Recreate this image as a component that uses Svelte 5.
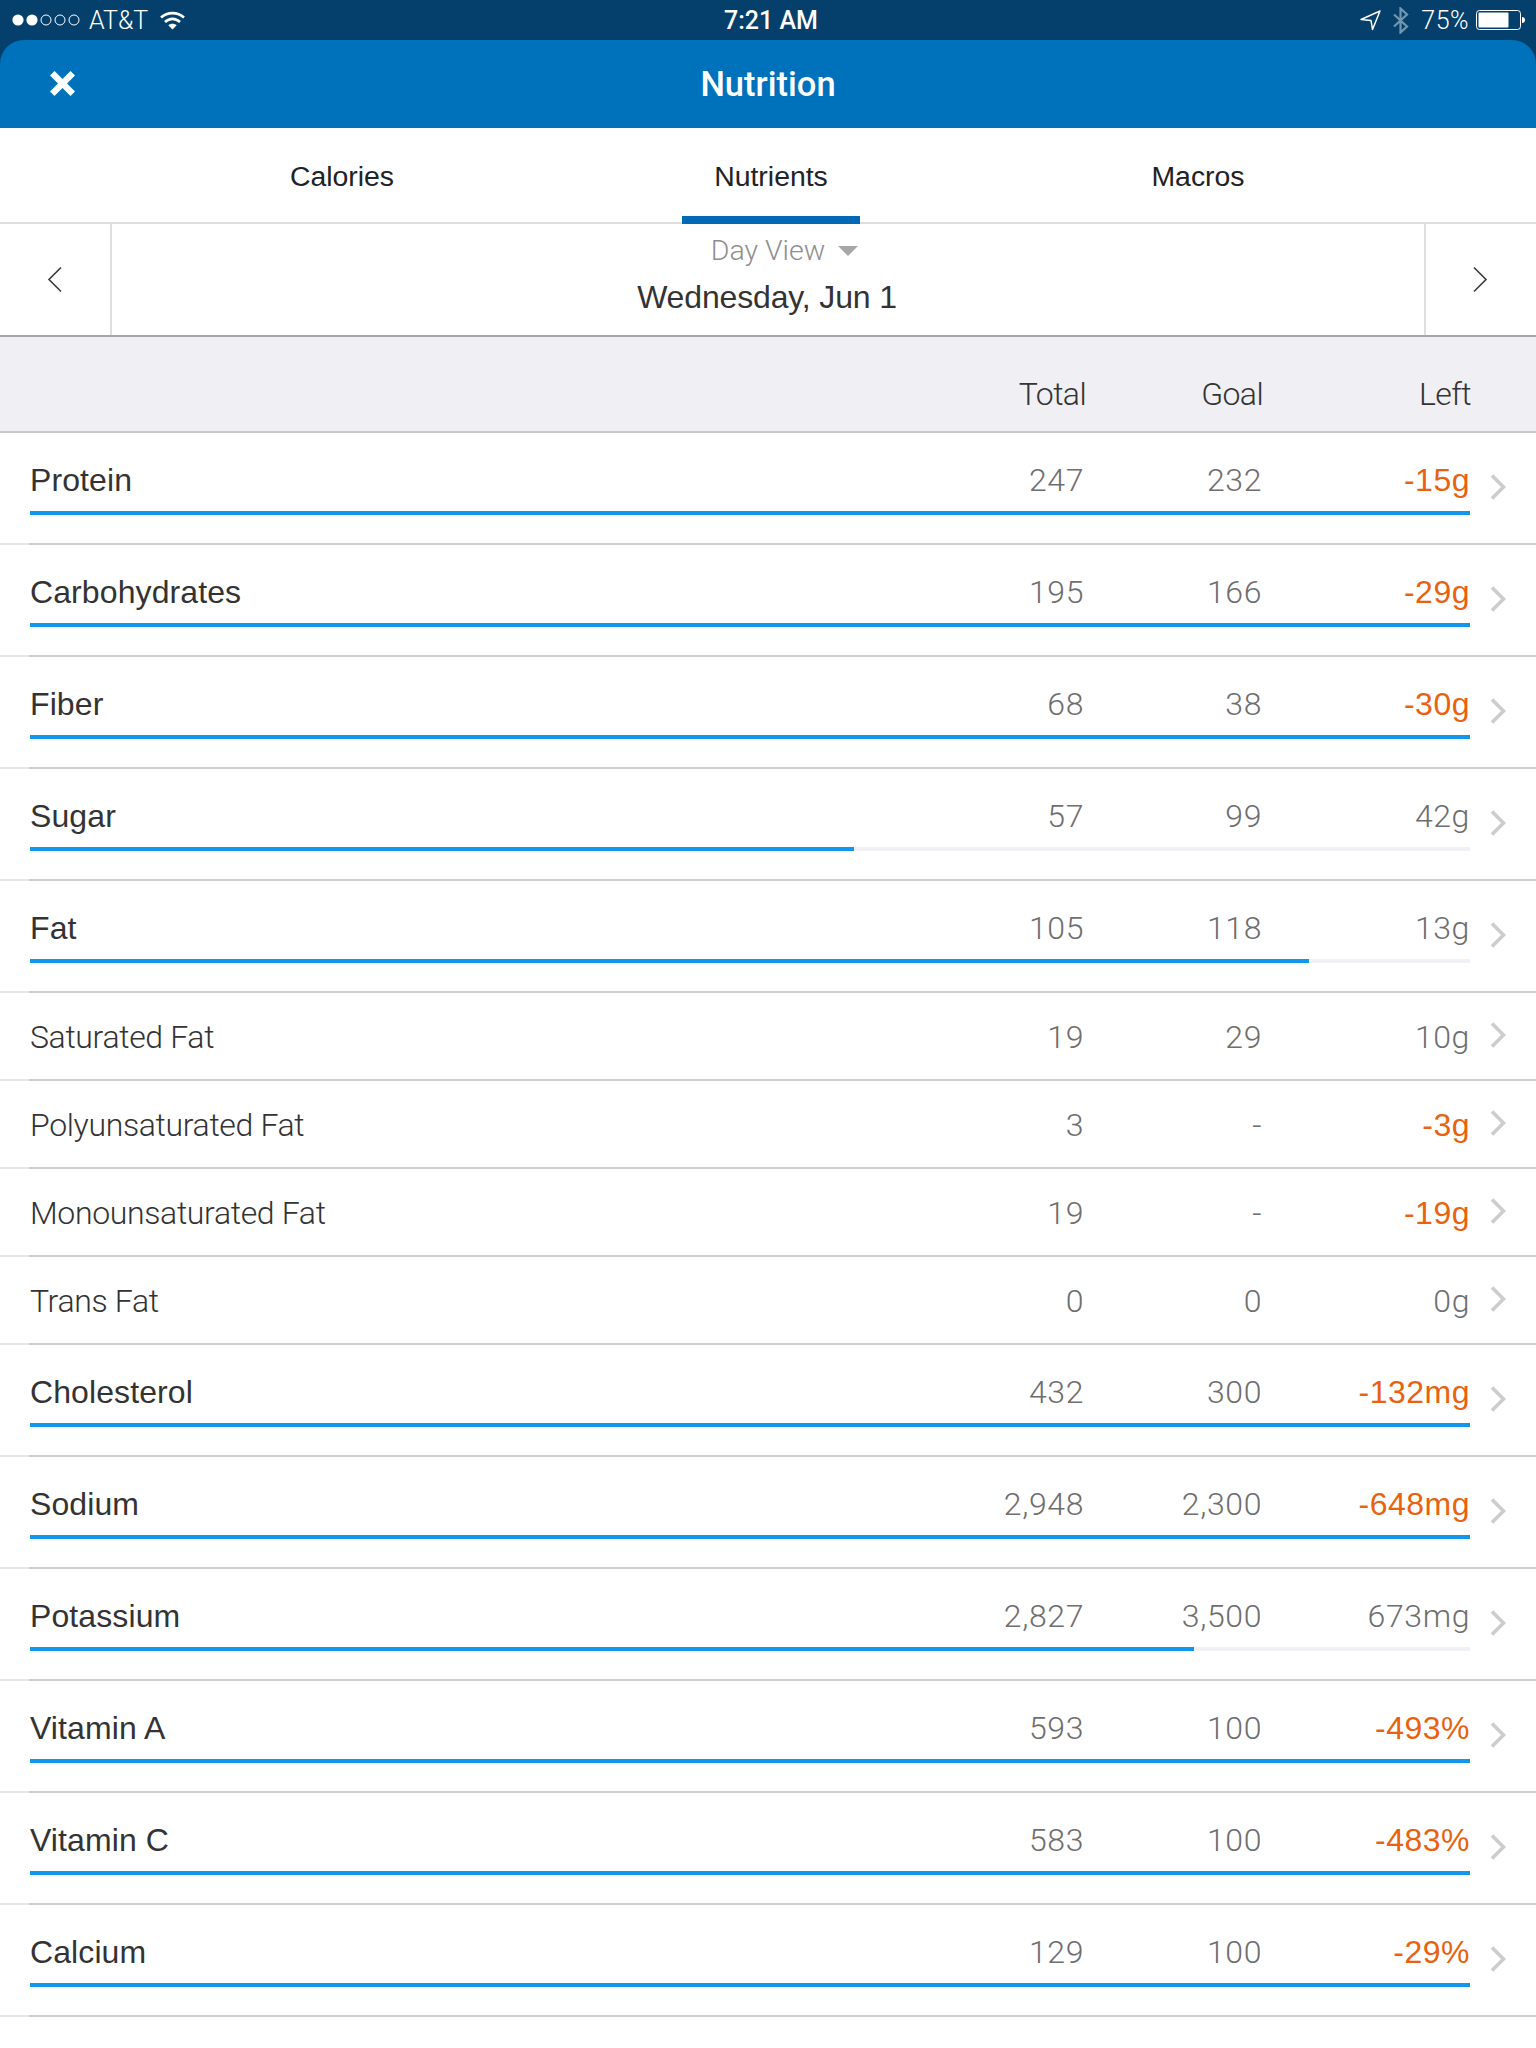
<script lang="ts">
  // Nutrition screen, nutrients tab. pct = measured bar fill, null = sub row with no bar.
  type Row = { name: string; total: string; goal: string; left: string; over?: boolean; pct: number | null };
  const rows: Row[] = [
    { name: "Protein", total: "247", goal: "232", left: "-15g", over: true, pct: 100 },
    { name: "Carbohydrates", total: "195", goal: "166", left: "-29g", over: true, pct: 100 },
    { name: "Fiber", total: "68", goal: "38", left: "-30g", over: true, pct: 100 },
    { name: "Sugar", total: "57", goal: "99", left: "42g", pct: 57.2 },
    { name: "Fat", total: "105", goal: "118", left: "13g", pct: 88.8 },
    { name: "Saturated Fat", total: "19", goal: "29", left: "10g", pct: null },
    { name: "Polyunsaturated Fat", total: "3", goal: "-", left: "-3g", over: true, pct: null },
    { name: "Monounsaturated Fat", total: "19", goal: "-", left: "-19g", over: true, pct: null },
    { name: "Trans Fat", total: "0", goal: "0", left: "0g", pct: null },
    { name: "Cholesterol", total: "432", goal: "300", left: "-132mg", over: true, pct: 100 },
    { name: "Sodium", total: "2,948", goal: "2,300", left: "-648mg", over: true, pct: 100 },
    { name: "Potassium", total: "2,827", goal: "3,500", left: "673mg", pct: 80.8 },
    { name: "Vitamin A", total: "593", goal: "100", left: "-493%", over: true, pct: 100 },
    { name: "Vitamin C", total: "583", goal: "100", left: "-483%", over: true, pct: 100 },
    { name: "Calcium", total: "129", goal: "100", left: "-29%", over: true, pct: 100 },
  ];
  const tabs = ["Calories", "Nutrients", "Macros"];
</script>

<div class="status">
  <div class="st-left">
    <svg class="dots" width="70" height="14" viewBox="0 0 70 14">
      <circle cx="6" cy="7" r="5.6" fill="#fff" />
      <circle cx="20" cy="7" r="5.6" fill="#fff" />
      <circle cx="34" cy="7" r="5" fill="none" stroke="#fff" stroke-width="1" />
      <circle cx="48" cy="7" r="5" fill="none" stroke="#fff" stroke-width="1" />
      <circle cx="62" cy="7" r="5" fill="none" stroke="#fff" stroke-width="1" />
    </svg>
    <span class="carrier">AT&amp;T</span>
    <svg class="wifi" width="25" height="19" viewBox="0 0 25 19" fill="none" stroke="#fff" stroke-width="2.6">
      <path d="M1 6.500C7.500 .6 17.500 .6 24 6.500" />
      <path d="M5 11C9.500 6.800 15.500 6.800 20 11" />
      <path d="M12.500 18.500L8.300 14.300C10.800 12.300 14.200 12.300 16.700 14.300Z" fill="#fff" stroke="none" />
    </svg>
  </div>
  <div class="time">7:21 AM</div>
  <div class="st-right">
    <svg width="21" height="21" viewBox="0 0 21 21" fill="none" stroke="#fff" stroke-width="1.5">
      <path d="M20 1L1 9.500L11 10.500L12.500 19.500Z" stroke-linejoin="round" />
    </svg>
    <svg class="bt" width="16" height="27" viewBox="0 0 16 27" fill="none" stroke="#fff" stroke-width="2.2">
      <path d="M1 7.500L14 19.500L7.500 25.500V1.500L14 7.500L1 19.500" />
    </svg>
    <span class="pct">75%</span>
    <svg width="49" height="20" viewBox="0 0 49 20">
      <rect x=".5" y=".5" width="44" height="19" rx="3" fill="none" stroke="#fff" />
      <rect x="2.500" y="2.500" width="30" height="15" rx="1" fill="#fff" />
      <path d="M46 7C48 7 49 8 49 10C49 12 48 13 46 13Z" fill="#fff" />
    </svg>
  </div>
</div>

<div class="app">
  <header class="nav">
    <svg class="close" width="25" height="25" viewBox="0 0 25 25">
      <path d="M4.500 0L12.500 8L20.500 0L25 4.500L17 12.500L25 20.500L20.500 25L12.500 17L4.500 25L0 20.500L8 12.500L0 4.500Z" fill="#fff" />
    </svg>
    <h1>Nutrition</h1>
  </header>
</div>

<div class="tabs">
  {#each tabs as t, i}
    <div class="tab" class:active={i === 1}><span>{t}</span></div>
  {/each}
</div>

<div class="datebar">
  <div class="arrow">
    <svg width="16" height="27" viewBox="0 0 16 27" fill="none" stroke="#3a3a3a" stroke-width="1.6">
      <path d="M14 1.500L2 13.500L14 25.500" />
    </svg>
  </div>
  <div class="date">
    <div class="view">Day View <i class="caret"></i></div>
    <div class="day">Wednesday, Jun 1</div>
  </div>
  <div class="arrow">
    <svg width="16" height="27" viewBox="0 0 16 27" fill="none" stroke="#3a3a3a" stroke-width="1.6">
      <path d="M2 1.500L14 13.500L2 25.500" />
    </svg>
  </div>
</div>

<div class="thead">
  <span></span>
  <span class="num">Total</span>
  <span class="num">Goal</span>
  <span class="num">Left</span>
</div>

{#each rows as r}
  <div class="row" class:sub={r.pct === null}>
    <div class="main">
      <div class="cells">
        <span class="name">{r.name}</span>
        <span class="val">{r.total}</span>
        <span class="val">{r.goal}</span>
        <span class="val" class:over={r.over}>{r.left}</span>
      </div>
      {#if r.pct !== null}
        <div class="track"><div class="fill" style="width: {r.pct}%"></div></div>
      {/if}
    </div>
    <svg class="chev" width="16" height="26" viewBox="0 0 16 26" fill="none" stroke="#cdcdd0" stroke-width="3.6">
      <path d="M2 1.500L13.500 13L2 24.500" />
    </svg>
  </div>
{/each}

<style>
  :global(body) {
    background: #fff;
    font-family: "Liberation Sans", Arial, sans-serif;
  }
  .status {
    height: 40px;
    background: #04406b;
    color: #fff;
    display: grid;
    grid-template-columns: 1fr auto 1fr;
    align-items: center;
    font-size: 25px;
  }
  .st-left {
    display: flex;
    align-items: center;
    padding-left: 12px;
  }
  .carrier {
    margin-left: 7px;
    font-family: Roboto, sans-serif;
    font-weight: 300;
  }
  .wifi {
    margin-left: 12px;
  }
  .time {
    font-family: Roboto, sans-serif;
    font-weight: 500;
    font-size: 25px;
    margin-left: 6px;
  }
  .st-right {
    display: flex;
    align-items: center;
    justify-content: flex-end;
    padding-right: 11px;
    gap: 12px;
  }
  .bt {
    opacity: 0.45;
  }
  .pct {
    font-family: Roboto, sans-serif;
    font-weight: 300;
    letter-spacing: 0.5px;
    margin-right: -5px;
  }
  .app {
    background: #04406b;
  }
  .nav {
    height: 88px;
    background: #0071bb;
    border-radius: 24px 24px 0 0;
    display: flex;
    align-items: center;
    justify-content: center;
    position: relative;
  }
  .close {
    position: absolute;
    left: 50px;
    top: 31px;
  }
  h1 {
    margin: 0;
    color: #fff;
    font-family: Roboto, sans-serif;
    font-weight: 500;
    font-size: 34.5px;
  }
  .tabs {
    height: 96px;
    box-sizing: border-box;
    border-bottom: 2px solid #dedede;
    display: grid;
    grid-template-columns: repeat(3, 1fr);
    padding: 0 124px 0 128px;
  }
  .tab {
    display: flex;
    justify-content: center;
    font-size: 28.4px;
    color: #222;
  }
  .tab span {
    display: block;
    height: 96px;
    box-sizing: border-box;
    padding: 30px 32px 0;
    line-height: 36px;
  }
  .tab.active span {
    border-bottom: 8px solid #0068b5;
    transform: translateX(1px);
  }
  .datebar {
    height: 113px;
    box-sizing: border-box;
    border-bottom: 2px solid #a6a6a6;
    display: grid;
    grid-template-columns: 112px 1fr 112px;
  }
  .arrow {
    display: flex;
    align-items: center;
    justify-content: center;
  }
  .arrow:first-child {
    border-right: 2px solid #dedede;
  }
  .arrow:last-child {
    border-left: 2px solid #dedede;
    padding-right: 2px;
  }
  .date {
    text-align: center;
    padding-top: 9px;
  }
  .view {
    font-family: Roboto, sans-serif;
    font-weight: 300;
    font-size: 28.5px;
    line-height: 36px;
    color: #8f8f8f;
    padding-left: 33px;
  }
  .caret {
    display: inline-block;
    width: 0;
    height: 0;
    border-left: 10px solid transparent;
    border-right: 10px solid transparent;
    border-top: 10px solid #a8a8a8;
    margin-left: 6px;
    vertical-align: 4px;
  }
  .day {
    font-size: 32px;
    line-height: 38px;
    margin-top: 9px;
    color: #333;
    letter-spacing: -0.15px;
    margin-right: 2px;
  }
  .thead {
    height: 96px;
    box-sizing: border-box;
    background: #efeff4;
    border-bottom: 2px solid #c8c8cc;
    padding: 37px 65px 0 30px;
    display: grid;
    grid-template-columns: 1fr 120px 177px 208px;
    font-family: Roboto, sans-serif;
    font-weight: 300;
    font-size: 32px;
    line-height: 40px;
    color: #333;
    letter-spacing: -0.6px;
  }
  .num {
    text-align: right;
  }
  .row {
    height: 112px;
    box-sizing: border-box;
    border-bottom: 2px solid;
    border-image: linear-gradient(to right, #e6e6e6 30px, #cfcfcf 30px) 1;
    padding-left: 30px;
    display: flex;
    align-items: center;
  }
  .row.sub {
    height: 88px;
  }
  .main {
    width: 1440px;
    flex: none;
    padding-top: 27px;
    height: 100%;
    box-sizing: border-box;
  }
  .sub .main {
    padding-top: 24px;
  }
  .cells {
    display: grid;
    grid-template-columns: 1fr 120px 178px 208px;
    align-items: baseline;
    height: 40px;
    line-height: 40px;
  }
  .name {
    font-size: 32px;
    color: #333;
    letter-spacing: 0.1px;
  }
  .sub .name {
    font-family: Roboto, sans-serif;
    font-weight: 300;
    color: #333;
    letter-spacing: -0.35px;
  }
  .val {
    text-align: right;
    font-family: Roboto, sans-serif;
    font-weight: 300;
    font-size: 32px;
    letter-spacing: 0.6px;
    color: #6e6e6e;
  }
  .val.over {
    color: #e8620f;
    font-family: "Liberation Sans", Arial, sans-serif;
    font-weight: 400;
    letter-spacing: 0.5px;
  }
  .track {
    height: 4px;
    margin-top: 11px;
    background: #f1f1f5;
  }
  .fill {
    height: 4px;
    background: #1196ee;
  }
  .chev {
    flex: none;
    margin-left: 20px;
    margin-bottom: 3px;
  }
</style>
